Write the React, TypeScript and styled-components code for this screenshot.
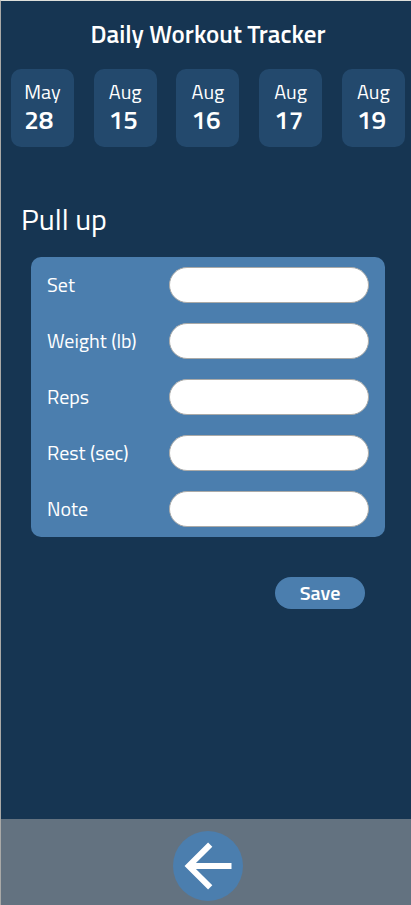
import React from "react";
import styled, { createGlobalStyle } from "styled-components";

const GlobalStyle = createGlobalStyle`
  *, *::before, *::after { box-sizing: border-box; }
  html, body { margin: 0; padding: 0; }
  body {
    background: #163552;
    font-family: "Titillium Web", Roboto, "Liberation Sans", sans-serif;
    color: #fff;
  }
  button, input { font: inherit; color: inherit; }
`;

const Screen = styled.div`
  display: flex;
  flex-direction: column;
  height: 905px;
  width: 100%;
  border-top: 1px solid #dfe0db;
  border-left: 1px solid #a9a9a7;
  background: #163552;
  overflow: hidden;
`;

const Title = styled.h1`
  margin: 17px 0 0 4px;
  height: 32px;
  font-size: 25px;
  line-height: 32px;
  font-weight: 600;
  text-align: center;
  white-space: nowrap;
`;

const Dates = styled.div`
  display: flex;
  justify-content: space-between;
  margin-top: 19px;
  padding: 0 6.2px 0 10px;
`;

const DateCard = styled.button`
  display: flex;
  flex-direction: column;
  align-items: center;
  width: 63px;
  height: 78px;
  padding: 9px 0 0;
  border: 0;
  border-radius: 10px;
  background: #23496d;
`;

const DateText = styled.span`
  display: flex;
  flex-direction: column;
  align-items: flex-start;
`;

const Month = styled.span`
  font-size: 20px;
  line-height: 28px;
`;

const Day = styled.span`
  font-size: 26px;
  line-height: 28px;
  font-weight: 600;
`;

const Exercise = styled.h2`
  margin: 50px 0 0 20px;
  font-size: 30px;
  line-height: 44px;
  height: 44px;
  font-weight: 400;
`;

const Panel = styled.form`
  display: flex;
  flex-direction: column;
  gap: 20px;
  margin: 16px 26px 0 30px;
  padding: 10px 16px;
  border-radius: 10px;
  background: #4b7eae;
`;

const Field = styled.label`
  display: flex;
  align-items: center;
  justify-content: space-between;
  height: 36px;
`;

const Label = styled.span`
  font-size: 20px;
  line-height: 36px;
  white-space: nowrap;
`;

const Input = styled.input`
  width: 200px;
  height: 36px;
  padding: 0 14px;
  border: 1px solid #aaaaa8;
  border-radius: 18px;
  background: #fff;
  color: #163552;
  outline: none;
`;

const Save = styled.button`
  align-self: flex-end;
  width: 90px;
  height: 32px;
  margin: 40px 46px 0 0;
  padding: 0;
  border: 0;
  border-radius: 16px;
  background: #4b7eae;
  font-size: 20px;
  line-height: 32px;
  font-weight: 600;
`;

const Footer = styled.footer`
  display: flex;
  justify-content: center;
  height: 86px;
  margin-top: auto;
  padding: 12px 0 0 4px;
  background: #637280;
`;

const Back = styled.button`
  width: 70px;
  height: 70px;
  padding: 0;
  border: 0;
  border-radius: 50%;
  background: #4b7eae;

  svg { display: block; }
`;

const dates = [
  { month: "May", day: "28" },
  { month: "Aug", day: "15" },
  { month: "Aug", day: "16" },
  { month: "Aug", day: "17" },
  { month: "Aug", day: "19" },
];

const fields = ["Set", "Weight (lb)", "Reps", "Rest (sec)", "Note"];

export default function App() {
  return (
    <>
      <GlobalStyle />
      <Screen>
        <Title>Daily Workout Tracker</Title>
        <Dates>
          {dates.map((d) => (
            <DateCard key={d.month + d.day}>
              <DateText>
                <Month>{d.month}</Month>
                <Day>{d.day}</Day>
              </DateText>
            </DateCard>
          ))}
        </Dates>
        <Exercise>Pull up</Exercise>
        <Panel>
          {fields.map((label) => (
            <Field key={label}>
              <Label>{label}</Label>
              <Input type="text" />
            </Field>
          ))}
        </Panel>
        <Save>Save</Save>
        <Footer>
          <Back aria-label="Back">
            <svg width="70" height="70" viewBox="0 0 70 70" fill="none" stroke="#fff">
              <path d="M37.2 13.6 L15.8 35 L37.2 56.4" strokeWidth="6" />
              <path d="M17 35 H58.5" strokeWidth="6" />
            </svg>
          </Back>
        </Footer>
      </Screen>
    </>
  );
}
